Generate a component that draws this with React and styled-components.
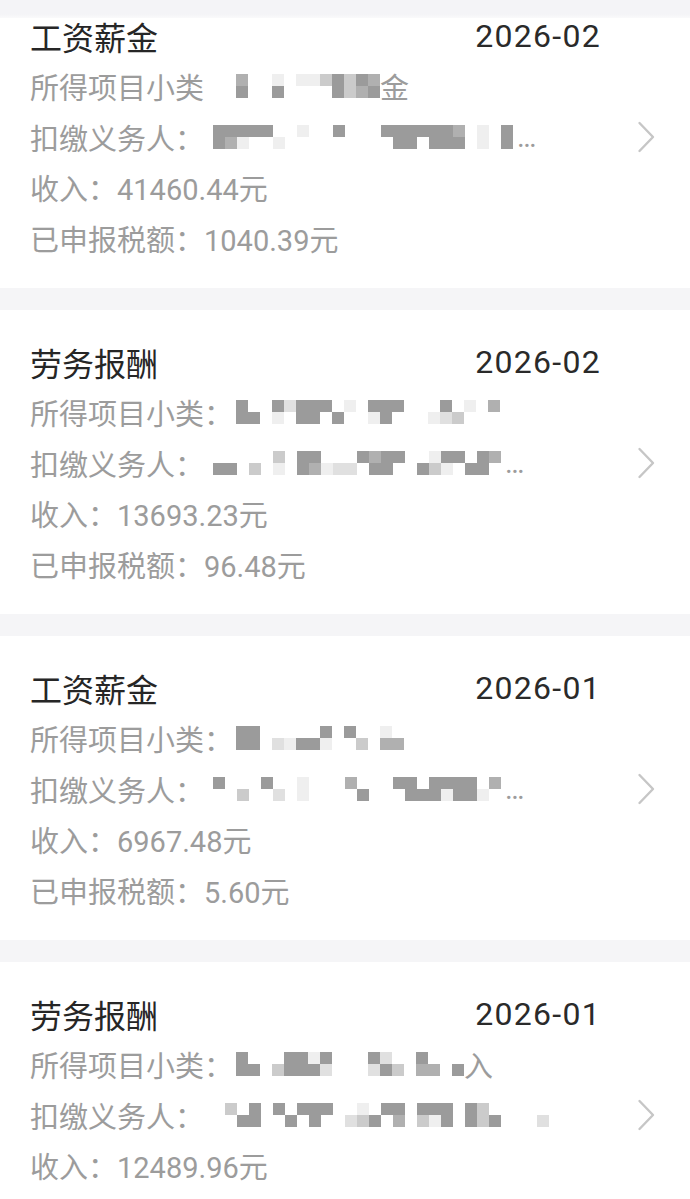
import React from "react";
import styled, { createGlobalStyle } from "styled-components";

const GlobalStyle = createGlobalStyle`
  body {
    margin: 0;
    background: #f5f5f7;
    font-family: "Roboto", "Noto Sans CJK SC", sans-serif;
  }
`;

// shades used by the blurred (mosaic) parts of the screenshot
const shades = {
  "1": "#efefef",
  "2": "#e0e0e0",
  "3": "#cbcbcb",
  "4": "#b0b0b0",
  "5": "#9b9b9b",
};

const records = [
  {
    title: "工资薪金",
    date: "2026-02",
    subColon: false,
    sub: { gap: 32, rows: ["4  1 1135354", "5  5    5345"], tail: "金" },
    payer: {
      gap: 9,
      rows: ["55555  1  5   5555554 1 5", "541  1         55 555 1 5"],
      tail: "…",
    },
    income: "41460.44",
    tax: "1040.39",
  },
  {
    title: "劳务报酬",
    date: "2026-02",
    subColon: true,
    sub: { gap: 32, rows: ["5  52555 1 555   5 1 4", "55 1 55 5  15   123"] },
    payer: {
      gap: 9,
      rows: ["     3 55   5455  155 54", "55 3 1 54122 55  531 55"],
      tail: "…",
    },
    income: "13693.23",
    tax: "96.48",
  },
  {
    title: "工资薪金",
    date: "2026-01",
    subColon: true,
    sub: { gap: 32, rows: ["55     5 5  1", "55 21551  3 44"] },
    payer: {
      gap: 9,
      rows: ["5   5  1   4   55 5555 4", "  3  2 1    5   5551551"],
      tail: "…",
    },
    income: "6967.48",
    tax: "5.60",
  },
  {
    title: "劳务报酬",
    date: "2026-01",
    subColon: true,
    sub: { gap: 32, rows: ["5   5515   52  5", "55 35552   253 44 5"], tail: "入" },
    payer: {
      gap: 9,
      rows: [" 3 5 5 555  1 55 555 53", "  55  5 5  235 4 315 535   2"],
    },
    income: "12489.96",
  },
];

const Mosaic = ({ gap, rows }) => {
  const cols = Math.max(...rows.map((r) => r.length));
  return (
    <MosaicGrid $gap={gap} $cols={cols}>
      {rows.map((r, ri) =>
        Array.from({ length: cols }).map((_, ci) => (
          <Cell key={ri + "-" + ci} $shade={shades[r[ci]]} />
        ))
      )}
    </MosaicGrid>
  );
};

const Chevron = () => (
  <ChevronIcon viewBox="0 0 18 32" width="18" height="32">
    <path
      d="M2.5 2 L16 16 L2.5 30"
      fill="none"
      stroke="#c6c6c6"
      strokeWidth="2.4"
      strokeLinecap="round"
      strokeLinejoin="round"
    />
  </ChevronIcon>
);

const RecordCard = ({ r }) => (
  <Card>
    <Body>
      <Head>
        <Title>{r.title}</Title>
        <DateText>{r.date}</DateText>
      </Head>
      <Line>
        <span>{r.subColon ? "所得项目小类：" : "所得项目小类"}</span>
        <Mosaic gap={r.subColon ? 3 : r.sub.gap} rows={r.sub.rows} />
        {r.sub.tail && <Tail>{r.sub.tail}</Tail>}
      </Line>
      <Line>
        <span>扣缴义务人：</span>
        <Mosaic gap={r.payer.gap} rows={r.payer.rows} />
        {r.payer.tail && <Tail $pad={4}>{r.payer.tail}</Tail>}
      </Line>
      <Line>收入：{r.income}元</Line>
      {/* last card's tax row sits below the fold: keep its slot */}
      <Line>{r.tax && `已申报税额：${r.tax}元`}</Line>
    </Body>
    <Chevron />
  </Card>
);

export default function App() {
  return (
    <Page>
      <GlobalStyle />
      <TopShade />
      <List>
        {records.map((r, i) => (
          <RecordCard key={i} r={r} />
        ))}
      </List>
    </Page>
  );
}

const Page = styled.div`
  position: relative;
  height: 100vh;
  overflow: hidden;
  background: #f5f5f7;
`;

const TopShade = styled.div`
  position: absolute;
  top: 0;
  left: 0;
  right: 0;
  height: 18px;
  background: linear-gradient(#f4f4f7 0%, #f4f4f7 80%, #fafafb 100%);
  z-index: 2;
`;

const List = styled.div`
  display: flex;
  flex-direction: column;
  gap: 22px;
  margin-top: -16px;
`;

const Card = styled.div`
  display: flex;
  align-items: center;
  background: #ffffff;
  padding: 27px 35px 25px 30px;
`;

const Body = styled.div`
  flex: 1;
  min-width: 0;
`;

const Head = styled.div`
  height: 50px;
  display: flex;
  align-items: center;
  justify-content: space-between;
`;

const Title = styled.div`
  font-family: "Noto Sans CJK SC", sans-serif;
  font-size: 32px;
  color: #262626;
`;

const DateText = styled.div`
  font-family: "Roboto", sans-serif;
  font-size: 32px;
  letter-spacing: 1.3px;
  color: #2a2a2a;
`;

const Line = styled.div`
  height: 50.5px;
  display: flex;
  align-items: center;
  font-size: 29px;
  color: #9c9c9c;
  white-space: nowrap;
`;

const MosaicGrid = styled.div`
  display: grid;
  grid-template-columns: repeat(${({ $cols }) => $cols}, 12px);
  grid-auto-rows: 12px;
  margin-left: ${({ $gap }) => $gap}px;
`;

const Cell = styled.span`
  background: ${({ $shade }) => $shade || "transparent"};
`;

const Tail = styled.span`
  margin-left: ${({ $pad }) => $pad || 0}px;
`;

const ChevronIcon = styled.svg`
  flex-shrink: 0;
  margin-left: 36px;
`;
